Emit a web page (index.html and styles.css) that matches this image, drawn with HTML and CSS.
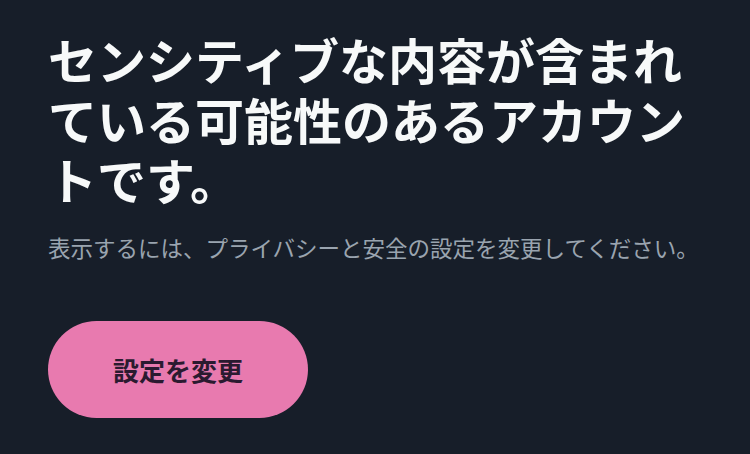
FILE: index.html
```html
<!DOCTYPE html>
<html lang="ja">
<head>
<meta charset="utf-8">
<link rel="stylesheet" href="styles.css">
</head>
<body>
<main class="notice">
  <h1 class="notice-title">センシティブな内容が含まれている可能性のあるアカウントです。</h1>
  <p class="notice-text">表示するには、プライバシーと安全の設定を変更してください。</p>
  <button class="notice-button" type="button">設定を変更</button>
</main>
</body>
</html>
```

FILE: styles.css
```css
html, body {
  margin: 0;
  padding: 0;
  background: #171e29;
}
body {
  width: 750px;
  height: 454px;
  overflow: hidden;
  font-family: "Noto Sans CJK JP", "Noto Sans", sans-serif;
}
.notice {
  display: flex;
  flex-direction: column;
  align-items: flex-start;
  padding: 29px 48px 0 48px;
}
.notice-title {
  margin: 0;
  font-size: 49px;
  line-height: 60px;
  font-weight: 700;
  color: #f7f9f9;
  width: 654px;
}
.notice-text {
  margin: 24px 0 0 0;
  font-size: 22.5px;
  line-height: 29px;
  color: #9aa4af;
}
.notice-button {
  margin-top: 59px;
  width: 260px;
  height: 97px;
  border: none;
  border-radius: 49px;
  background: #e87aaf;
  color: #2b1a30;
  font-family: "Noto Sans CJK JP", "Noto Sans", sans-serif;
  font-size: 26px;
  font-weight: 700;
  padding: 0;
}
```
